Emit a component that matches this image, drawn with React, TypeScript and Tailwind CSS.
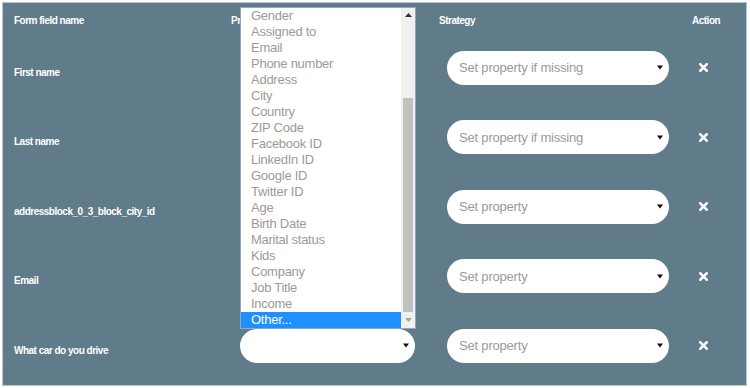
const rows = [
  { label: "First name", strategy: "Set property if missing" },
  { label: "Last name", strategy: "Set property if missing" },
  { label: "addressblock_0_3_block_city_id", strategy: "Set property" },
  { label: "Email", strategy: "Set property" },
  { label: "What car do you drive", strategy: "Set property" },
];

const options = [
  "Gender",
  "Assigned to",
  "Email",
  "Phone number",
  "Address",
  "City",
  "Country",
  "ZIP Code",
  "Facebook ID",
  "LinkedIn ID",
  "Google ID",
  "Twitter ID",
  "Age",
  "Birth Date",
  "Marital status",
  "Kids",
  "Company",
  "Job Title",
  "Income",
  "Other...",
];

function Arrow() {
  return (
    <svg width="6" height="5" viewBox="0 0 6 5" className="shrink-0">
      <path d="M0 0.5h6L3 4.5z" fill="#111" />
    </svg>
  );
}

function RemoveIcon() {
  return (
    <svg width="9" height="9" viewBox="0 0 9 9">
      <path d="M1.3 1.3l6.4 6.4M7.7 1.3l-6.4 6.4" stroke="#fff" strokeWidth="2.6" strokeLinecap="square" />
    </svg>
  );
}

function SelectBox({ text, width }: { text?: string; width: string }) {
  return (
    <div
      className={`${width} h-[34px] rounded-full bg-white flex items-center justify-between pl-3 pr-[6px] text-[13px] tracking-[-0.015em] text-[#9a9a9a]`}
    >
      <span>{text}</span>
      <Arrow />
    </div>
  );
}

function Listbox() {
  return (
    <div className="absolute bottom-full left-0 z-10 w-[176px] h-[322px] bg-white border border-[#8fa6c9] flex">
      <div className="flex-1 flex flex-col">
        {options.map((o) => (
          <div
            key={o}
            className={`h-4 leading-4 pl-[10px] text-[13px] tracking-[-0.02em] ${
              o === "Other..." ? "bg-[#1e90ff] text-white" : "text-[#a09a95]"
            }`}
          >
            {o}
          </div>
        ))}
      </div>
      <div className="w-[14px] bg-[#f0f0f0] flex flex-col items-center">
        <div className="h-[15px] flex items-center justify-center">
          <svg width="7" height="4" viewBox="0 0 7 4">
            <path d="M0 4h7L3.5 0z" fill="#333" />
          </svg>
        </div>
        <div className="mt-[75px] w-[10px] h-[214px] bg-[#c1c1c1]" />
        <div className="flex-1 flex items-center justify-center">
          <svg width="7" height="4" viewBox="0 0 7 4">
            <path d="M0 0h7L3.5 4z" fill="#a3a3a3" />
          </svg>
        </div>
      </div>
    </div>
  );
}

export default function App() {
  return (
    <div className="w-[750px] h-[388px] bg-white pt-[2px] pl-[2px] font-['Liberation_Sans',Arial,sans-serif]">
      <div className="w-[745px] h-[384px] bg-[#607b89] border border-[#b9c6cc]">
        <div className="grid grid-cols-[217px_208px_241px_60px] pl-[11px] h-[30px] pt-[4px] items-center text-[10px] font-bold tracking-[-0.05em] text-white">
          <span>Form field name</span>
          <span>Property</span>
          <span>Strategy</span>
          <span className="pl-[12px]">Action</span>
        </div>
        {rows.map((r, i) => (
          <div
            key={r.label}
            className="grid grid-cols-[217px_208px_241px_60px] pl-[11px] h-[69.5px] items-center"
          >
            <span className="mt-[9px] text-[10px] font-bold tracking-[-0.05em] text-white">{r.label}</span>
            <div className="pl-[9px]">
              <div className="relative w-[175px]">
                {i === rows.length - 1 && <Listbox />}
                <SelectBox width="w-[175px]" />
              </div>
            </div>
            <div className="pl-[8px]">
              <SelectBox text={r.strategy} width="w-[222px]" />
            </div>
            <div className="pl-[19px] flex items-center">
              <RemoveIcon />
            </div>
          </div>
        ))}
      </div>
    </div>
  );
}
